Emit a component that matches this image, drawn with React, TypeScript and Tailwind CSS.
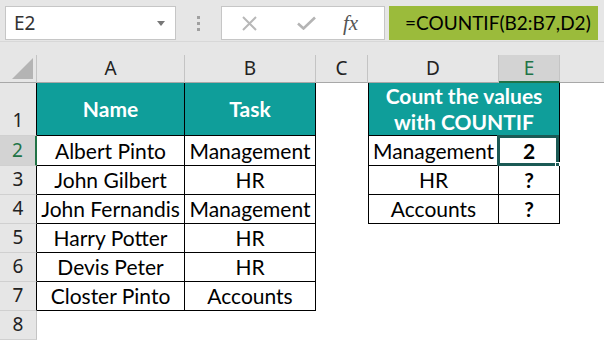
import React from 'react';

const cellFont = { fontFamily: 'Lato, "Open Sans", sans-serif' };

const rowHeights = ['h-[53px]', 'h-[30px]', 'h-[29px]', 'h-[29px]', 'h-[29px]', 'h-[29px]', 'h-[29px]', 'h-[29px]'];

const left: [string, string][] = [
  ['Albert Pinto', 'Management'],
  ['John Gilbert', 'HR'],
  ['John Fernandis', 'Management'],
  ['Harry Potter', 'HR'],
  ['Devis Peter', 'HR'],
  ['Closter Pinto', 'Accounts'],
];

const right: [string, string][] = [
  ['Management', '2'],
  ['HR', '?'],
  ['Accounts', '?'],
];

function ColHeader({ label, active, last }: { label: string; active?: boolean; last?: boolean }) {
  return (
    <div
      className={
        'flex items-center justify-center h-[28px] text-[19px] ' +
        (last ? '' : 'border-r border-[#c4c4c4] ') +
        (active ? 'bg-[#d3d3d3] text-[#217346] border-b-2 border-b-[#217346]' : 'text-[#222] border-b border-b-[#a8a8a8]')
      }
      style={{ fontFamily: '"Noto Sans", sans-serif' }}
    >
      {label}
    </div>
  );
}

export default function App() {
  return (
    <div className="w-[604px] h-[340px] overflow-hidden bg-[#e6e6e6] select-none">
      {/* formula bar */}
      <div className="h-[42px] flex items-start pt-[6px] border-b border-[#d8d8d8]">
        <div className="ml-[5px] w-[171px] h-[34px] bg-white border border-[#c6c6c6] flex items-center justify-between pl-[8px] pr-[10px]">
          <span className="text-[19px] text-[#333]" style={{ fontFamily: '"Noto Sans", sans-serif' }}>E2</span>
          <svg width="8" height="5" viewBox="0 0 8 5"><path d="M0 0h8L4 5z" fill="#777" /></svg>
        </div>
        <div className="w-[45px] h-[34px] flex flex-col items-center justify-center gap-[3px]">
          <span className="w-[3px] h-[3px] bg-[#a0a0a0]" />
          <span className="w-[3px] h-[3px] bg-[#a0a0a0]" />
          <span className="w-[3px] h-[3px] bg-[#a0a0a0]" />
        </div>
        <div className="w-[164px] h-[34px] bg-white border border-[#c6c6c6] flex items-center">
          <svg className="ml-[20px]" width="15" height="15" viewBox="0 0 15 15">
            <path d="M1 1L14 14M14 1L1 14" stroke="#b8b8b8" strokeWidth="2" fill="none" />
          </svg>
          <svg className="ml-[40px]" width="19" height="14" viewBox="0 0 19 14">
            <path d="M1 7.5L6.5 12.5L18 1.5" stroke="#b4b4b4" strokeWidth="2.6" fill="none" />
          </svg>
          <span
            className="ml-[27px] text-[21px] italic text-[#555] leading-none"
            style={{ fontFamily: '"Liberation Serif", serif' }}
          >
            fx
          </span>
        </div>
        <div className="ml-[4px] w-[209px] h-[34px] bg-[#9bbb3b] flex items-center pl-[16px]">
          <span className="text-[19px] text-black" style={cellFont}>=COUNTIF(B2:B7,D2)</span>
        </div>
      </div>

      {/* sheet */}
      <div className="mt-[13px] grid grid-cols-[37px_148px_131px_52px_131px_61px_44px]">
        {/* column headers */}
        <div className="h-[28px] border-r border-[#c4c4c4] border-b border-b-[#a8a8a8] flex items-end justify-end pr-[3px] pb-[3px]">
          <svg width="21" height="21" viewBox="0 0 21 21"><path d="M21 0V21H0z" fill="#b4b4b4" /></svg>
        </div>
        <ColHeader label="A" />
        <ColHeader label="B" />
        <ColHeader label="C" />
        <ColHeader label="D" />
        <ColHeader label="E" active />
        <div className="h-[28px] border-b border-b-[#a8a8a8]" />

        {rowHeights.map((h, i) => {
          const r = i + 1;
          const rowHead = (
            <div
              key={'h' + r}
              className={
                h +
                ' flex items-end justify-center pb-[1px] text-[19px] border-b border-b-[#d0d0d0] ' +
                (r === 2
                  ? 'bg-[#d3d3d3] text-[#217346] border-r-2 border-r-[#217346]'
                  : r <= 7
                  ? 'text-[#222] border-r border-r-black'
                  : 'text-[#222] border-r border-r-[#c4c4c4]')
              }
              style={{ fontFamily: '"Noto Sans", sans-serif' }}
            >
              {r}
            </div>
          );

          const cells: React.ReactNode[] = [rowHead];
          const base = h + ' flex items-center justify-center text-[21px] whitespace-nowrap';
          const white = base + ' bg-white text-black';
          const teal = base + ' bg-[#0f9e9a] text-white font-bold';

          // A, B
          if (r === 1) {
            cells.push(
              <div key="a" className={teal + ' border-r border-b border-black'} style={cellFont}>Name</div>,
              <div key="b" className={teal + ' border-r border-b border-black'} style={cellFont}>Task</div>
            );
          } else if (r <= 7) {
            const [n, t] = left[r - 2];
            cells.push(
              <div key="a" className={white + ' border-r border-b border-black'} style={cellFont}>{n}</div>,
              <div key="b" className={white + ' border-r border-b border-black'} style={cellFont}>{t}</div>
            );
          } else {
            cells.push(<div key="a" className={white} />, <div key="b" className={white} />);
          }

          // C
          cells.push(<div key="c" className={white} />);

          // D, E
          if (r === 1) {
            cells.push(
              <div
                key="de"
                className={h + ' col-span-2 bg-[#0f9e9a] text-white font-bold text-[21px] leading-[26px] text-center flex flex-col justify-center border-l border-r border-b border-black'}
                style={cellFont}
              >
                <span>Count the values</span>
                <span>with COUNTIF</span>
              </div>
            );
          } else if (r <= 4) {
            const [d, e] = right[r - 2];
            cells.push(
              <div key="d" className={white + ' border-l border-r border-b border-black'} style={cellFont}>{d}</div>,
              <div key="e" className={white + ' relative font-bold border-r border-b border-black'} style={cellFont}>
                {e}
                {r === 2 && (
                  <div className="absolute -left-[2px] -top-[1px] w-[62px] h-[31px] border-[3px] border-[#1b5a55]">
                    <div className="absolute -right-[4px] -bottom-[4px] w-[5px] h-[5px] bg-[#1b5a55] border border-white" />
                  </div>
                )}
              </div>
            );
          } else {
            cells.push(<div key="d" className={white} />, <div key="e" className={white} />);
          }

          cells.push(<div key="f" className={white} />);
          return <React.Fragment key={r}>{cells}</React.Fragment>;
        })}
      </div>
    </div>
  );
}
